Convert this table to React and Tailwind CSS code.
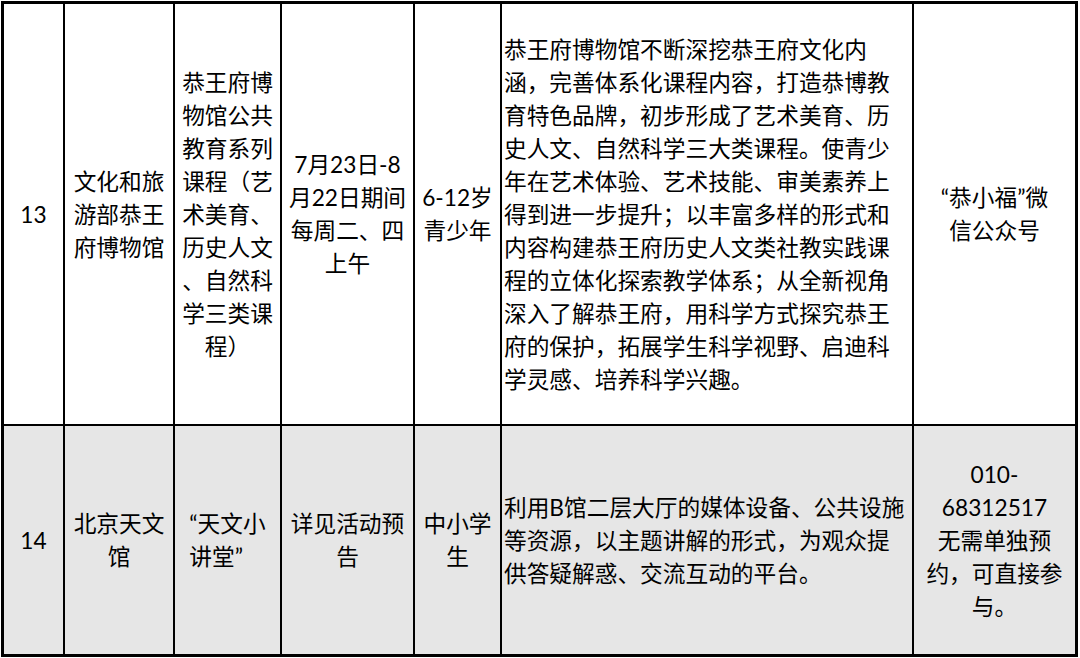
const rows = [
  {
    bg: 'bg-white',
    h: 'h-[422px]',
    cells: [
      ['13'],
      ['文化和旅', '游部恭王', '府博物馆'],
      ['恭王府博', '物馆公共', '教育系列', '课程（艺', '术美育、', '历史人文', '、自然科', '学三类课', '程）'],
      ['7月23日-8', '月22日期间', '每周二、四', '上午'],
      ['6-12岁', '青少年'],
      [
        '恭王府博物馆不断深挖恭王府文化内',
        '涵，完善体系化课程内容，打造恭博教',
        '育特色品牌，初步形成了艺术美育、历',
        '史人文、自然科学三大类课程。使青少',
        '年在艺术体验、艺术技能、审美素养上',
        '得到进一步提升；以丰富多样的形式和',
        '内容构建恭王府历史人文类社教实践课',
        '程的立体化探索教学体系；从全新视角',
        '深入了解恭王府，用科学方式探究恭王',
        '府的保护，拓展学生科学视野、启迪科',
        '学灵感、培养科学兴趣。',
      ],
      ['“恭小福”微', '信公众号'],
    ],
  },
  {
    bg: 'bg-[#e6e6e6]',
    h: 'h-[231px]',
    cells: [
      ['14'],
      ['北京天文', '馆'],
      ['“天文小', '讲堂”'],
      ['详见活动预', '告'],
      ['中小学', '生'],
      [
        '利用B馆二层大厅的媒体设备、公共设施',
        '等资源，以主题讲解的形式，为观众提',
        '供答疑解惑、交流互动的平台。',
      ],
      ['010-', '68312517', '无需单独预', '约，可直接参', '与。'],
    ],
  },
]

function Cell({ lines, col, last, lastRow }) {
  // description column is left aligned, the rest centred
  const left = col === 5
  const block = !left && lines[0].startsWith('“天')
  return (
    <div
      className={`flex items-center border-black ${left ? 'justify-start pl-[2px]' : 'justify-center'} ${
        last ? 'border-r-[3px]' : 'border-r-2'
      } ${lastRow ? 'border-b-[3px]' : 'border-b-2'}`}
    >
      <div className={left || block ? 'text-left' : 'text-center'}>
        {lines.map((l, i) => (
          <div key={i} className="whitespace-nowrap">
            {l}
          </div>
        ))}
      </div>
    </div>
  )
}

export default function App() {
  return (
    <div className="w-[1080px] h-[658px] bg-white pt-[1px] pl-[1px] overflow-hidden">
      <div
        className="w-[1077px] border-l-[3px] border-t-[3px] border-black text-black text-[22.7px] leading-[33px]"
        style={{ fontFamily: 'Lato, "Noto Sans CJK SC", sans-serif' }}
      >
        {rows.map((row, r) => (
          <div
            key={r}
            className={`grid grid-cols-[61px_110px_107px_133px_87px_412px_164px] ${row.bg} ${row.h}`}
          >
            {row.cells.map((lines, c) => (
              <Cell key={c} lines={lines} col={c} last={c === 6} lastRow={r === rows.length - 1} />
            ))}
          </div>
        ))}
      </div>
    </div>
  )
}
